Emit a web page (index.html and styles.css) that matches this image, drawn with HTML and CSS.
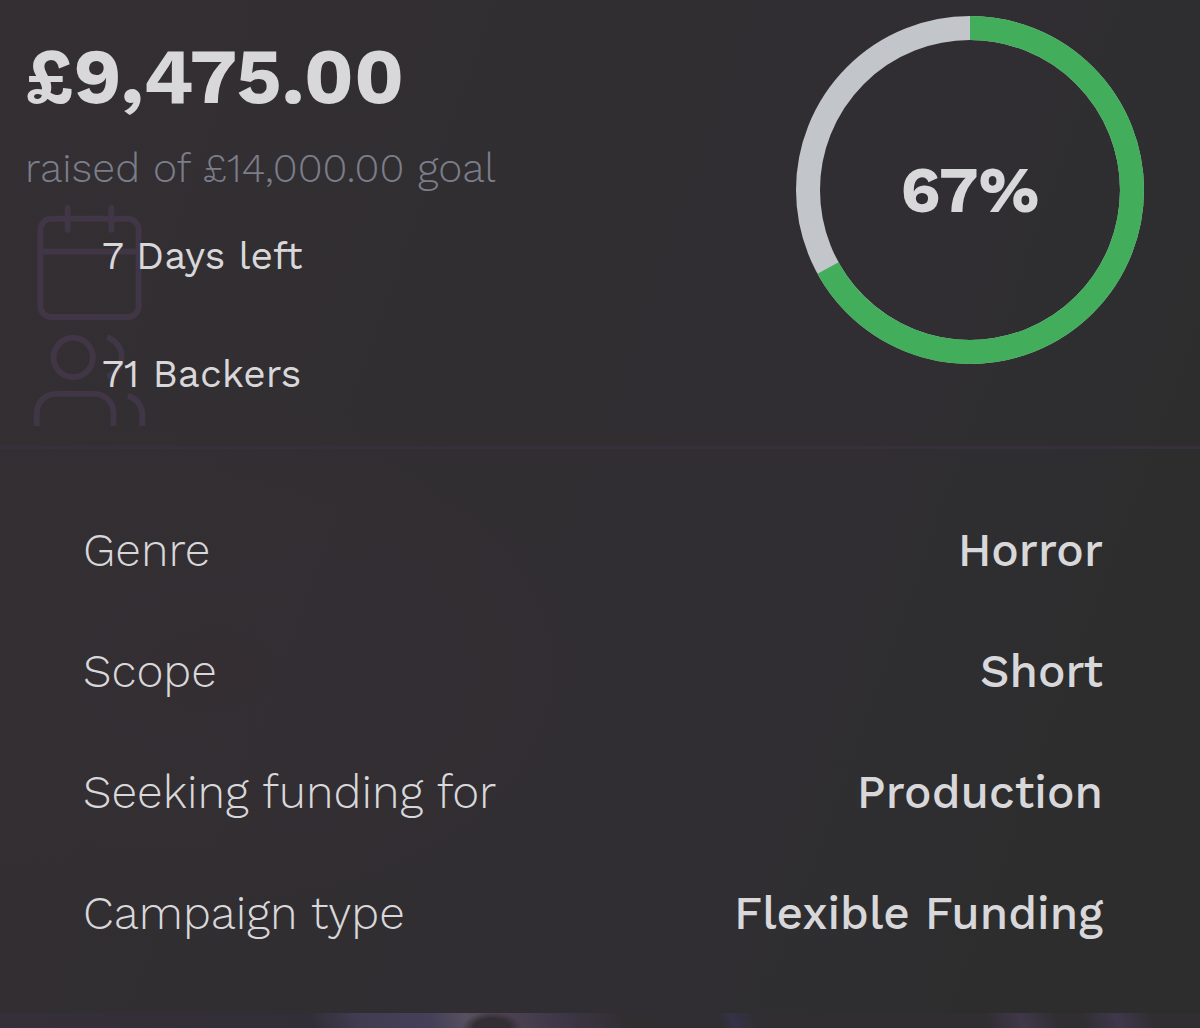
FILE: index.html
```html
<!DOCTYPE html>
<html lang="en">
<head>
    <meta charset="UTF-8">
    <meta name="viewport" content="width=device-width, initial-scale=1.0">
    <title>Campaign progress</title>
    <link rel="stylesheet" href="styles.css">
</head>
<body>
    <main class="campaign">
        <section class="summary">
            <div class="funding">
                <h1 class="amount">£9,475.00</h1>
                <p class="goal">raised of £14,000.00 goal</p>
                <ul class="stats">
                    <li>
                        <svg class="stat-icon calendar-icon" viewBox="0 0 24 24" aria-hidden="true">
                            <rect x="3" y="4" width="18" height="18" rx="2"></rect>
                            <line x1="16" y1="2" x2="16" y2="6"></line>
                            <line x1="8" y1="2" x2="8" y2="6"></line>
                            <line x1="3" y1="10" x2="21" y2="10"></line>
                        </svg>
                        <span>7 Days left</span>
                    </li>
                    <li>
                        <svg class="stat-icon users-icon" viewBox="0 0 24 24" aria-hidden="true">
                            <path d="M17 21.7V19a4 4 0 0 0-4-4H5a4 4 0 0 0-4 4v2.7"></path>
                            <circle cx="8.6" cy="7.4" r="4.1"></circle>
                            <path d="M23 21.7V19a4 4 0 0 0-3-3.6"></path>
                            <path d="M15.7 3.2a4.3 4.3 0 0 1 0 8.2"></path>
                        </svg>
                        <span>71 Backers</span>
                    </li>
                </ul>
            </div>
            <div class="progress">
                <svg viewBox="0 0 348 348" aria-hidden="true">
                    <circle class="progress-track" cx="174" cy="174" r="162"></circle>
                    <circle class="progress-value" cx="174" cy="174" r="162" pathLength="100" stroke-dasharray="67 100" transform="rotate(-90 174 174)"></circle>
                </svg>
                <span class="percent">67%</span>
            </div>
        </section>

        <dl class="details">
            <div class="detail">
                <dt>Genre</dt>
                <dd>Horror</dd>
            </div>
            <div class="detail">
                <dt>Scope</dt>
                <dd>Short</dd>
            </div>
            <div class="detail">
                <dt>Seeking funding for</dt>
                <dd>Production</dd>
            </div>
            <div class="detail">
                <dt>Campaign type</dt>
                <dd>Flexible Funding</dd>
            </div>
        </dl>
    </main>
    <div class="backdrop"></div>
</body>
</html>
```
FILE: styles.css
```css
* {
    box-sizing: border-box;
}
body {
    margin: 0;
    min-height: 100vh;
    display: flex;
    flex-direction: column;
    font-family: "Work Sans", "Open Sans", sans-serif;
    color: #d8d7da;
    background-color: #302e31;
}
.campaign {
    background:
        radial-gradient(ellipse at 18% 66%, #342e33 0%, transparent 28%),
        linear-gradient(110deg, #332f33 0%, #312e32 40%, #302e32 65%, #2d2d2e 85%);
}
.summary {
    display: flex;
    justify-content: space-between;
    padding: 16px 56px 46px 25px;
    border-bottom: 3px solid #372f3b;
}
.amount {
    margin: 14px 0 0;
    font-size: 78px;
    font-weight: 700;
    line-height: 92px;
}
.goal {
    margin: 20px 0 0;
    font-size: 41px;
    font-weight: 300;
    line-height: 52px;
    color: #7b7e8a;
}
.stats {
    list-style: none;
    margin: 36px 0 0;
    padding: 0;
}
.stats li {
    position: relative;
    padding-left: 77px;
    font-size: 39px;
    line-height: 52px;
}
.stats li + li {
    margin-top: 66px;
}
.stats span {
    position: relative;
}
/* icons sit behind the stat text */
.stat-icon {
    position: absolute;
    fill: none;
    stroke: #403645;
    stroke-linejoin: round;
}
.calendar-icon {
    top: -33px;
    left: -1px;
    width: 131px;
    stroke-width: 1.1;
    stroke-linecap: round;
}
.users-icon {
    top: -26px;
    left: 7px;
    width: 115px;
    stroke-width: 1.25;
}
.progress {
    position: relative;
    flex: none;
    width: 348px;
    height: 348px;
    display: grid;
    place-items: center;
}
.progress svg {
    position: absolute;
    inset: 0;
}
.progress circle {
    fill: none;
    stroke-width: 24;
}
.progress .progress-track {
    stroke: #c2c5ca;
}
.progress .progress-value {
    stroke: #42ad5a;
}
.percent {
    font-size: 65px;
    font-weight: 700;
}
.details {
    margin: 0;
    padding: 40px 97px 40px 83px;
}
.detail {
    display: flex;
    align-items: center;
    justify-content: space-between;
    min-height: 121px;
    font-size: 46px;
    line-height: 60px;
}
.detail dt {
    font-weight: 300;
}
.detail dd {
    margin: 0;
    font-weight: 500;
    text-align: right;
}
/* sliver of the page artwork below the panel */
.backdrop {
    flex: 1;
    min-height: 14px;
    background:
        radial-gradient(ellipse 30px 16px at 41% 100%, #332e34 60%, transparent 100%),
        linear-gradient(70deg, #342f39 0%, #322e37 26%, #413c51 30%, #454058 36%, #57505f 39%, #4a4050 43%, #3d3646 47%, #312e32 52%, #302e31 60%, #343247 61%, #302e31 63%, #302e31 82%, #40374a 85%, #302e31 88%, #302e31 90%, #40374c 93%, #302e31 96%);
}
```
